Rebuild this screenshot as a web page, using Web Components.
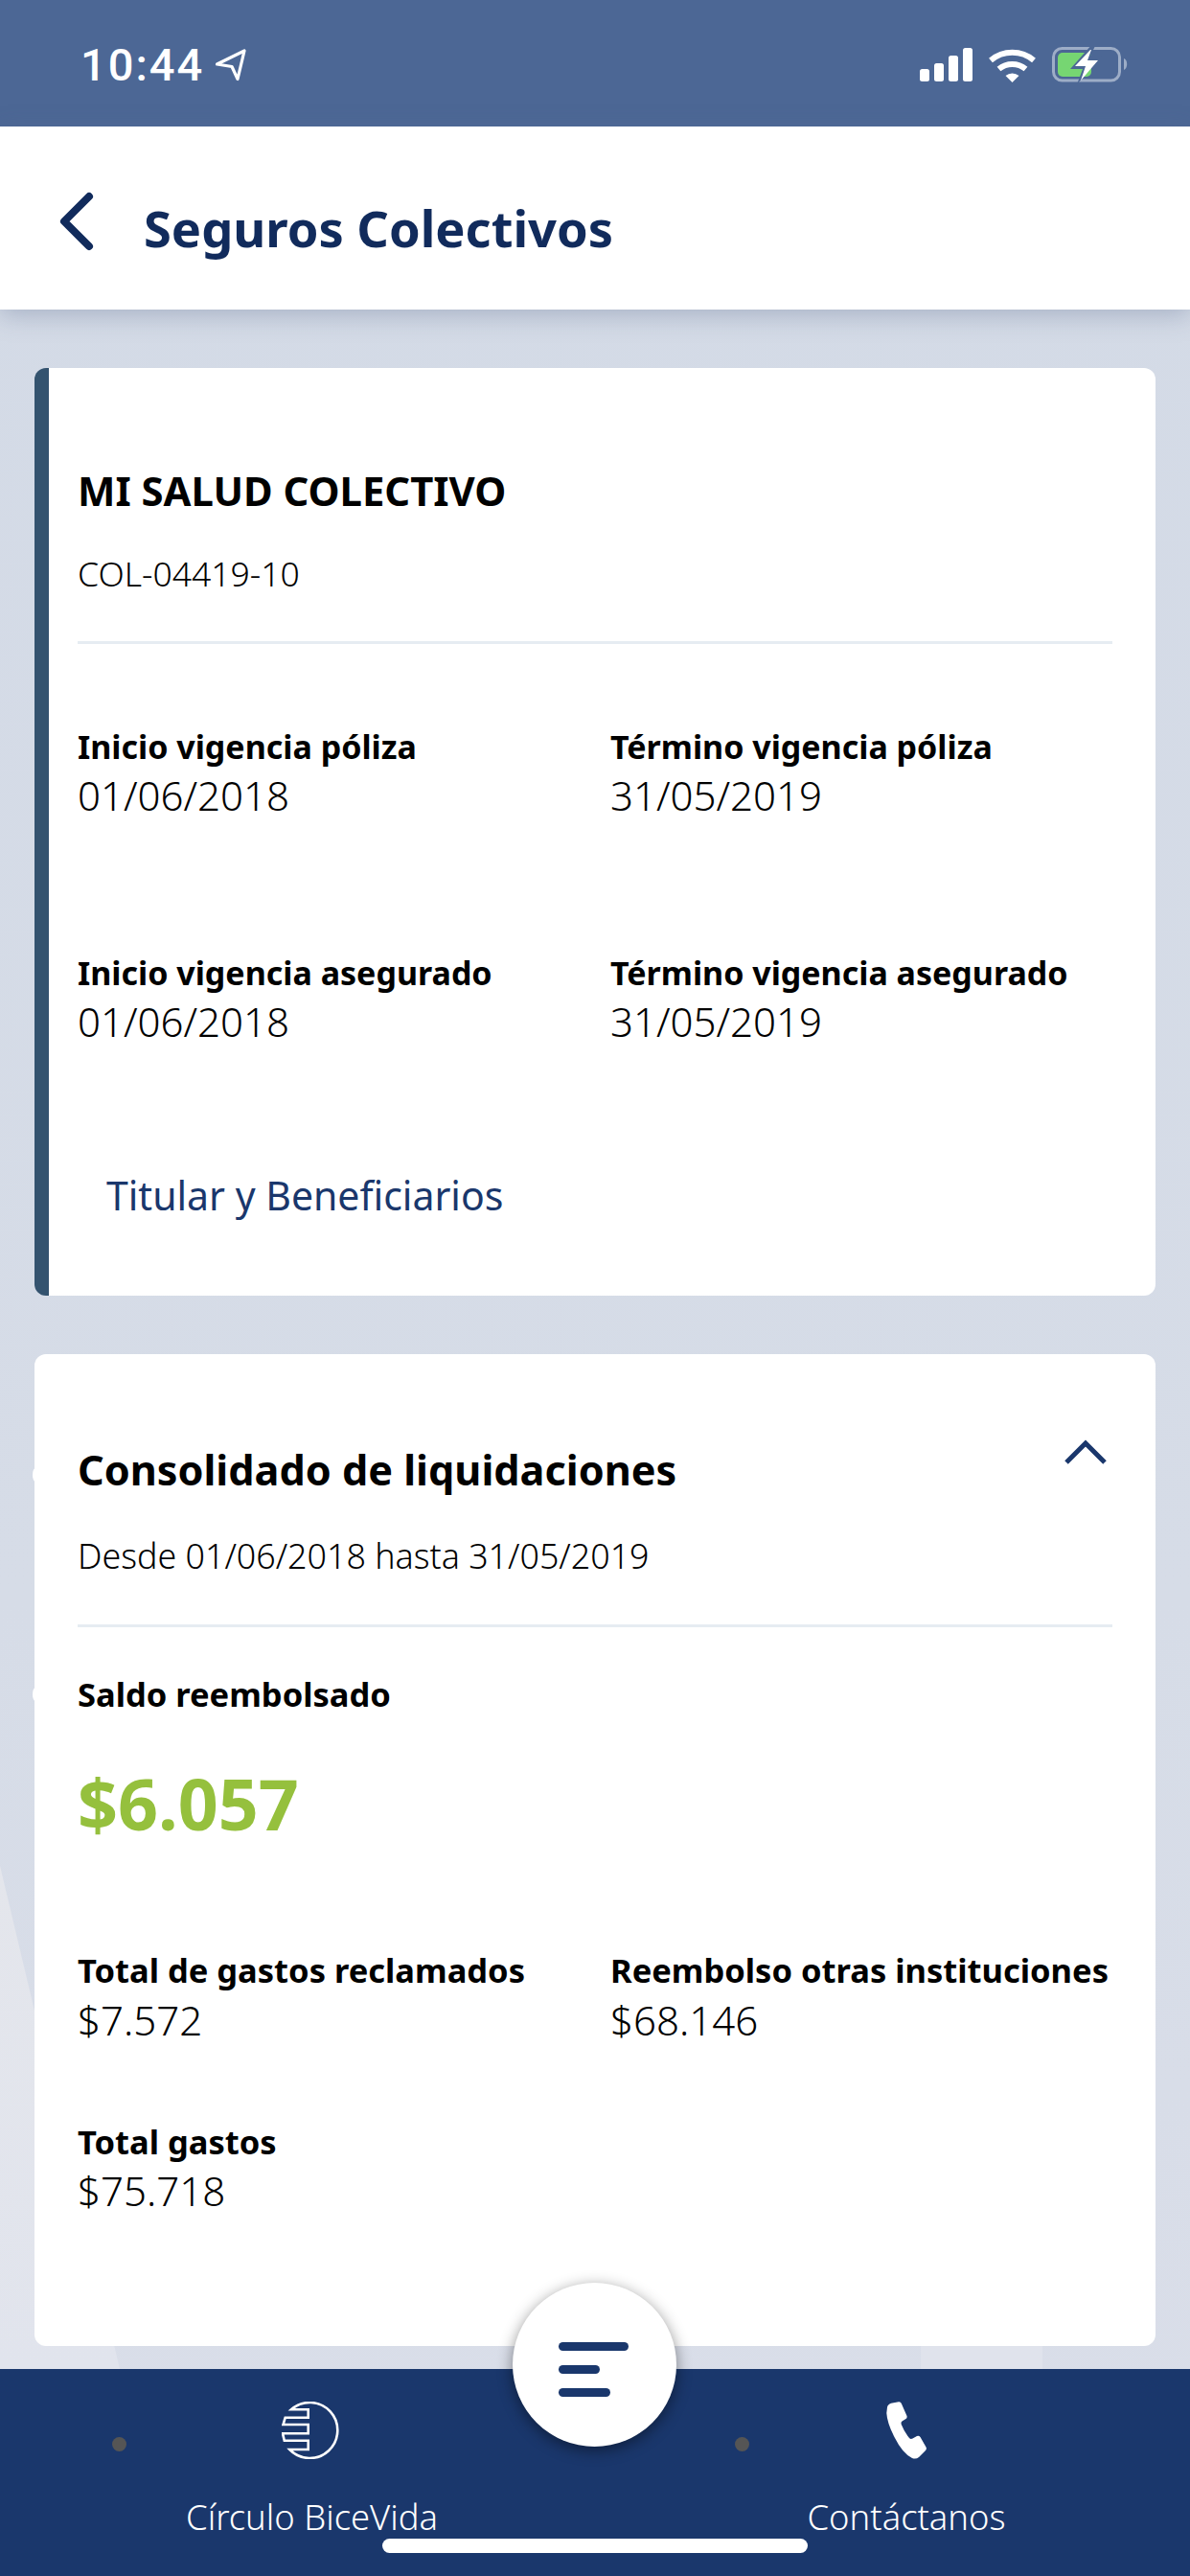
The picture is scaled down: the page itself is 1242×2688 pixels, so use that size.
<!DOCTYPE html>
<html lang="es"><head><meta charset="utf-8"><style>
html,body{margin:0;padding:0}
body{width:1242px;height:2688px;overflow:hidden;font-family:"Noto Sans","Open Sans",sans-serif}
</style></head><body>
<app-screen>
<status-bar slot="top"></status-bar>
<app-header slot="top" title="Seguros Colectivos"></app-header>
<info-card accent style="margin-top:61px;height:968px;padding-top:107px;--label:34px">
  <card-head title="MI SALUD COLECTIVO" sub="COL-04419-10" variant="policy"></card-head>
  <field-grid style="margin-top:90px;row-gap:147.4px">
    <data-field label="Inicio vigencia póliza" value="01/06/2018"></data-field>
    <data-field label="Término vigencia póliza" value="31/05/2019"></data-field>
    <data-field label="Inicio vigencia asegurado" value="01/06/2018"></data-field>
    <data-field label="Término vigencia asegurado" value="31/05/2019"></data-field>
  </field-grid>
  <link-text>Titular y Beneficiarios</link-text>
</info-card>
<info-card bumps style="margin-top:61px;height:1035px;padding-top:98.6px">
  <card-head title="Consolidado de liquidaciones" sub="Desde 01/06/2018 hasta 31/05/2019" variant="section" collapsible></card-head>
  <big-amount label="Saldo reembolsado" value="$6.057"></big-amount>
  <field-grid style="margin-top:121px;row-gap:88.7px">
    <data-field label="Total de gastos reclamados" value="$7.572"></data-field>
    <data-field label="Reembolso otras instituciones" value="$68.146"></data-field>
    <data-field label="Total gastos" value="$75.718"></data-field>
  </field-grid>
</info-card>
<bottom-nav slot="bottom"></bottom-nav>
</app-screen>
<script>
const def=(n,html)=>customElements.define(n,class extends HTMLElement{
  connectedCallback(){ if(this.shadowRoot)return; this.attachShadow({mode:'open'}).innerHTML=html(this); }
});
def('app-screen',()=>`<style>
:host{display:flex;flex-direction:column;width:1242px;height:2688px;position:relative;overflow:hidden;
background:linear-gradient(180deg,#d3dae6 0%,#d6dce7 62%,#dadee9 100%)}
main{flex:1;display:flex;flex-direction:column;padding:0 36px;min-height:0;position:relative}
.w1{position:absolute;left:0;top:1947px;width:125px;height:525px;background:linear-gradient(180deg,#e4e6ec,#e1e4ed);clip-path:polygon(0 0,100% 100%,0 100%)}
.w2{position:absolute;left:961px;top:2448px;width:127px;height:24px;background:#e0e3ec}
</style><slot name="top"></slot><div class="w1"></div><div class="w2"></div><main><slot></slot></main><slot name="bottom"></slot>`);
def('status-bar',()=>`<style>
:host{display:flex;justify-content:space-between;height:132px;background:#4c6795;color:#fff;flex:none}
.t{font:500 47px/47px Roboto,"Noto Sans",sans-serif;letter-spacing:2px;margin:44px 0 0 84px;display:flex;height:47px}
svg{display:block}
</style><div class="t">10:44<svg style="margin:7px 0 0 11px" width="34" height="34" viewBox="0 0 34 34"><path d="M2.500 16 31 2 24 31.500 18 18.500Z" fill="none" stroke="#fff" stroke-width="3.200" stroke-linejoin="round"/></svg></div>
<svg style="margin:49px 0 0 0" width="282" height="38" viewBox="960 49 282 38">
<g fill="#fff"><rect x="960" y="72" width="10" height="13" rx="2.500"/><rect x="975" y="66" width="10" height="19" rx="2.500"/><rect x="990" y="58" width="10" height="27" rx="2.500"/><rect x="1005" y="50" width="10" height="35" rx="2.500"/></g>
<g fill="none" stroke="#fff" stroke-width="6"><path d="M1034 63a35 35 0 0 1 45 0"/><path d="M1042.500 72a22 22 0 0 1 28 0"/></g>
<path fill="#fff" d="M1049.500 79a11 11 0 0 1 14 0L1056.500 86Z"/>
<rect x="1099.500" y="50.500" width="69" height="33.500" rx="9" fill="none" stroke="#9dadc7" stroke-width="3"/>
<path fill="#9dadc7" d="M1173 61c4 1 4.500 10 0 12Z"/>
<rect x="1104" y="55" width="35" height="25" rx="5" fill="#76d672"/>
<path fill="#4c6795" d="M1140 46 1117 72h13l-6 16 26-30h-12l6-12Z"/>
<path fill="#fff" d="M1138 52 1122 69h11l-5 15 18-21h-11l4-11Z"/>
</svg>`);
def('app-header',el=>`<style>
:host{display:flex;align-items:center;height:191px;background:#fff;flex:none;box-shadow:0 6px 24px rgba(90,105,140,.35);position:relative;z-index:1}
svg{margin:6px 0 0 60px;display:block}
h1{margin:21px 0 0 52px;font:700 52.4px/1 "Noto Sans",sans-serif;color:#112b5c}
</style><svg width="38" height="62" viewBox="0 0 38 62"><path d="M33 5 7 31l26 26" fill="none" stroke="#112b5c" stroke-width="8" stroke-linecap="round" stroke-linejoin="round"/></svg><h1>${el.getAttribute('title')}</h1>`);
def('info-card',el=>`<style>
:host{display:block;box-sizing:border-box;background:#fff;border-radius:12px;padding:0 45px;flex:none;position:relative;${el.hasAttribute('accent')?'border-left:15px solid #34536f;padding-left:30px;':''}}
i{position:absolute;left:-2px;width:6px;height:14px;border-radius:50%;background:#fff}
</style>${el.hasAttribute('bumps')?'<i style="top:119px"></i><i style="top:348px"></i>':''}<slot></slot>`);
def('card-head',el=>{const p=el.getAttribute('variant')==='policy';return `<style>
:host{display:block;position:relative;border-bottom:3px solid #e6ecf2;height:${p?'181':'186.4'}px;box-sizing:border-box}
.a{font:700 ${p?41.8:43.2}px/1 "Noto Sans",sans-serif;color:#000}
.b{font:300 ${p?35.5:35.8}px/1 "Noto Sans",sans-serif;color:#000;margin-top:${p?48.2:50.9}px}
svg{position:absolute;right:5px;top:-11.6px;display:block}
</style><div class="a">${el.getAttribute('title')}</div><div class="b">${el.getAttribute('sub')}</div>${el.hasAttribute('collapsible')?'<svg width="46" height="29" viewBox="0 0 46 29"><path d="M3 26 23 6l20 20" fill="none" stroke="#1a376c" stroke-width="5"/></svg>':''}`});
def('field-grid',()=>`<style>:host{display:grid;grid-template-columns:556px 1fr}</style><slot></slot>`);
def('data-field',el=>`<style>
:host{display:block;white-space:nowrap}
.l{font:700 var(--label,34.5px)/1 "Noto Sans",sans-serif;color:#000}
.v{font:300 42px/1 "Noto Sans",sans-serif;color:#000;margin-top:13px}
</style><div class="l">${el.getAttribute('label')}</div><div class="v">${el.getAttribute('value')}</div>`);
def('link-text',()=>`<style>:host{display:block;font:400 41px/1 "Noto Sans",sans-serif;color:#1a376c;margin:140px 0 0 30px}</style><slot></slot>`);
def('big-amount',el=>`<style>
:host{display:block}
.l{font:700 34.5px/1 "Noto Sans",sans-serif;color:#000;margin-top:53.4px}
.v{font:700 73.5px/1 "Noto Sans",sans-serif;color:#95c03d;margin-top:59px}
</style><div class="l">${el.getAttribute('label')}</div><div class="v">${el.getAttribute('value')}</div>`);
def('nav-item',el=>`<style>
:host{display:flex;flex-direction:column;align-items:center;color:#fff;font:300 36.4px/1 "Noto Sans",sans-serif;white-space:nowrap;width:${el.getAttribute('w')}px}
.i{height:60px;margin-bottom:42px;margin-right:${el.getAttribute('nudge')||0}px}
</style><div class="i"><slot name="icon"></slot></div><slot></slot>`);
def('bottom-nav',()=>`<style>
:host{display:flex;justify-content:space-between;flex:none;height:216px;background:#1a376c;position:relative;padding:34px 195px 0;box-sizing:border-box;z-index:2}
svg{display:block}
.fab{position:absolute;left:535px;top:-90px;width:171px;height:171px;border-radius:50%;background:#fff;box-shadow:0 4px 16px rgba(0,0,0,.45);display:flex;flex-direction:column;gap:15px;padding:62px 0 0 48px;box-sizing:border-box}
.fab b{display:block;height:9px;border-radius:5px;background:#1a376c}
.dot{position:absolute;width:15px;height:15px;border-radius:50%;background:#555;top:71px}
.home{position:absolute;left:399px;width:444px;height:15px;top:177px;border-radius:8px;background:#fff}
</style>
<nav-item w="261" nudge="4"><svg slot="icon" width="60" height="60" viewBox="0 0 60 60" fill="none" stroke="#fff" stroke-width="2.600"><path d="M10 8.300A29 29 0 1 1 8.300 50H27.700V40.700H2.800L1 33.300H27.700V24H1.500L3.700 16.700H27.700V8.300Z"/></svg>Círculo BiceVida</nav-item>
<nav-item w="202"><svg slot="icon" width="43" height="60" viewBox="0 0 43 60"><path fill="#fff" d="M1 6Q1.500 3 5 1.800L13 .2Q15 0 15.800 2L21.500 15Q22 17 20.500 18L16.500 20.500Q15 21.500 15.800 24 19 32 24 38 25.500 39.500 27.500 38.500L32 36Q34 35 35.500 37L41.500 47.500Q42.500 49.500 41 51L34 58Q31 60.500 27 59 17 54 9 38 1 23 .3 12Z"/></svg>Contáctanos</nav-item>
<span class="dot" style="left:117px"></span><span class="dot" style="left:767px"></span>
<div class="fab"><b style="width:73px"></b><b style="width:43px"></b><b style="width:54px"></b></div>
<div class="home"></div>`);
</script>
</body></html>
